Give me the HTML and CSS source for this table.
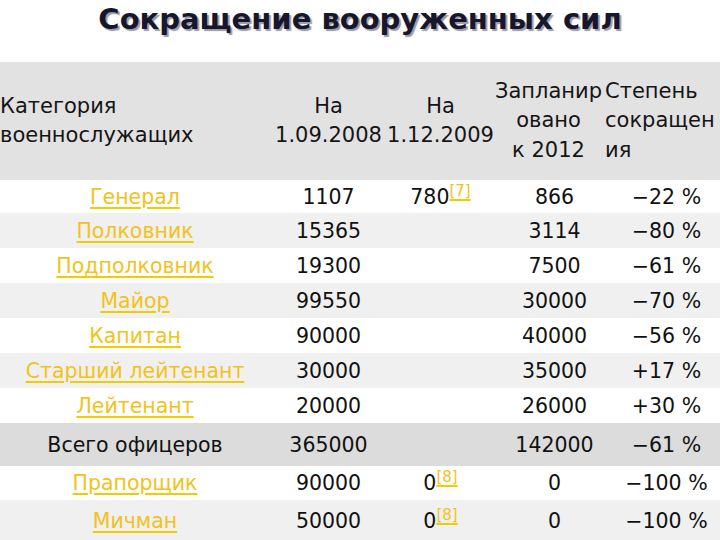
FILE: index.html
```html
<!DOCTYPE html>
<html lang="ru">
<head>
<meta charset="utf-8">
<link rel="stylesheet" href="styles.css">
</head>
<body>
<h1 class="title">Сокращение вооруженных сил</h1>
<table class="grid">
  <colgroup>
    <col class="c1"><col class="c2"><col class="c3"><col class="c4"><col class="c5">
  </colgroup>
  <thead>
    <tr class="head">
      <th class="h-cat">Категория<br>военнослужащих</th>
      <th class="h-num">На<br>1.09.2008</th>
      <th class="h-num">На<br>1.12.2009</th>
      <th class="h-plan">Запланир<br>овано<br>к 2012</th>
      <th class="h-deg">Степень<br>сокращен<br>ия</th>
    </tr>
  </thead>
  <tbody>
    <tr class="r w first"><td class="cat"><a>Генерал</a></td><td>1107</td><td>780<sup><a>[7]</a></sup></td><td class="plan">866</td><td class="deg">−22 %</td></tr>
    <tr class="r g"><td class="cat"><a>Полковник</a></td><td>15365</td><td></td><td class="plan">3114</td><td class="deg">−80 %</td></tr>
    <tr class="r w"><td class="cat"><a>Подполковник</a></td><td>19300</td><td></td><td class="plan">7500</td><td class="deg">−61 %</td></tr>
    <tr class="r g"><td class="cat"><a>Майор</a></td><td>99550</td><td></td><td class="plan">30000</td><td class="deg">−70 %</td></tr>
    <tr class="r w"><td class="cat"><a>Капитан</a></td><td>90000</td><td></td><td class="plan">40000</td><td class="deg">−56 %</td></tr>
    <tr class="r g"><td class="cat"><a>Старший лейтенант</a></td><td>30000</td><td></td><td class="plan">35000</td><td class="deg">+17 %</td></tr>
    <tr class="r w"><td class="cat"><a>Лейтенант</a></td><td>20000</td><td></td><td class="plan">26000</td><td class="deg">+30 %</td></tr>
    <tr class="r total"><td class="cat">Всего офицеров</td><td>365000</td><td></td><td class="plan">142000</td><td class="deg">−61 %</td></tr>
    <tr class="r w short"><td class="cat"><a>Прапорщик</a></td><td>90000</td><td>0<sup><a>[8]</a></sup></td><td class="plan">0</td><td class="deg">−100 %</td></tr>
    <tr class="r g tall"><td class="cat"><a>Мичман</a></td><td>50000</td><td>0<sup><a>[8]</a></sup></td><td class="plan">0</td><td class="deg">−100 %</td></tr>
  </tbody>
</table>
</body>
</html>
```
FILE: styles.css
```css
html, body {
  margin: 0;
  padding: 0;
  background: #ffffff;
  width: 720px;
  height: 540px;
  overflow: hidden;
}
body {
  font-family: "DejaVu Sans", Verdana, sans-serif;
  color: #111111;
}
.title {
  margin: 0;
  padding-top: 2px;
  height: 62px;
  box-sizing: border-box;
  text-align: center;
  font-size: 29px;
  line-height: 34px;
  font-weight: bold;
  color: #16162c;
  text-shadow: 2px 2px 1px #9a9aa8;
}
.grid {
  border-collapse: collapse;
  table-layout: fixed;
  width: 722px;
  margin-left: 0;
  font-size: 20.5px;
}
.c1 { width: 270px; }
.c2 { width: 117px; }
.c3 { width: 107px; }
.c4 { width: 109px; }
.c5 { width: 119px; }
.head {
  background: #e2e2e2;
  height: 118px;
}
.head th {
  font-weight: normal;
  font-size: 21px;
  line-height: 29.5px;
  padding: 0;
  vertical-align: middle;
  color: #151515;
  white-space: nowrap;
}
.h-cat { text-align: left; padding-left: 0; padding-top: 4px; }
.h-num { text-align: center; padding-top: 8px; }
.h-plan { text-align: center; padding-top: 0; }
.h-deg { text-align: left; }
.head .h-deg { padding-left: 2px; }
.r td {
  padding: 0;
  text-align: center;
  line-height: 24px;
  white-space: nowrap;
}
.r { height: 35px; }
.first { height: 33px; }
.w { background: #ffffff; }
.g { background: #f0f0f0; }
.total { background: #dcdcdc; height: 43px; }
.short { height: 34px; }
.tall { height: 42px; }
.r .plan { padding-left: 12px; }
.r .deg { padding-left: 8px; }
.cat a, sup a {
  color: #f3c21a;
  text-decoration: underline;
  text-decoration-color: #f0cc00;
  text-decoration-thickness: 2px;
  text-underline-offset: 3px;
}
sup {
  font-size: 15px;
  line-height: 0;
  vertical-align: 8px;
}
```
